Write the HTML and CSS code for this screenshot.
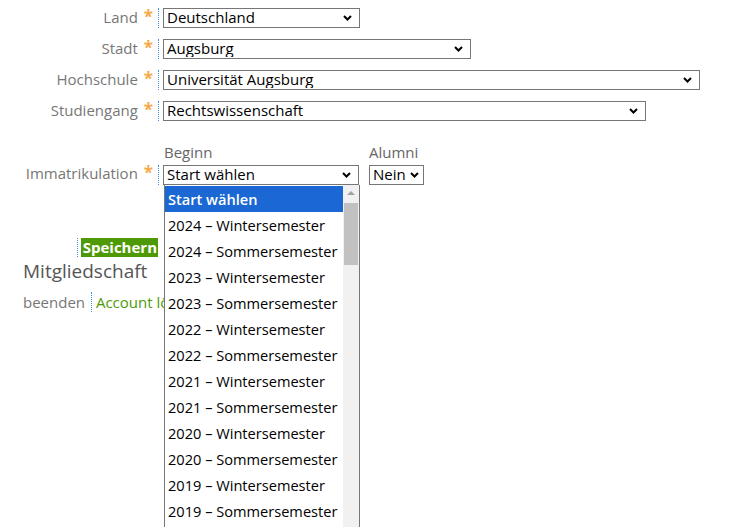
FILE: index.html
```html
<!DOCTYPE html>
<html lang="de">

<head>
    <meta charset="UTF-8">
    <meta name="viewport" content="width=device-width, initial-scale=1.0">
    <title>Profil</title>
    <link rel="stylesheet" href="styles.css">
</head>

<body>
    <form class="profile">
        <div class="row">
            <label class="lbl">Land <span class="req">*</span></label>
            <span class="field">
                <select class="sel sel-land">
                    <option>Deutschland</option>
                </select>
            </span>
        </div>
        <div class="row">
            <label class="lbl">Stadt <span class="req">*</span></label>
            <span class="field">
                <select class="sel sel-stadt">
                    <option>Augsburg</option>
                </select>
            </span>
        </div>
        <div class="row">
            <label class="lbl">Hochschule <span class="req">*</span></label>
            <span class="field">
                <select class="sel sel-hs">
                    <option>Universität Augsburg</option>
                </select>
            </span>
        </div>
        <div class="row">
            <label class="lbl">Studiengang <span class="req">*</span></label>
            <span class="field">
                <select class="sel sel-sg">
                    <option>Rechtswissenschaft</option>
                </select>
            </span>
        </div>

        <div class="row row-immatr">
            <label class="lbl">Immatrikulation <span class="req">*</span></label>
            <div class="pair">
                <div class="group">
                    <div class="caption">Beginn</div>
                    <span class="field">
                        <select class="sel sel-start">
                            <option>Start wählen</option>
                        </select>
                        <!-- geöffnete Liste -->
                        <div class="dropdown">
                            <ul class="options">
                                <li class="active">Start wählen</li>
                                <li>2024 – Wintersemester</li>
                                <li>2024 – Sommersemester</li>
                                <li>2023 – Wintersemester</li>
                                <li>2023 – Sommersemester</li>
                                <li>2022 – Wintersemester</li>
                                <li>2022 – Sommersemester</li>
                                <li>2021 – Wintersemester</li>
                                <li>2021 – Sommersemester</li>
                                <li>2020 – Wintersemester</li>
                                <li>2020 – Sommersemester</li>
                                <li>2019 – Wintersemester</li>
                                <li>2019 – Sommersemester</li>
                            </ul>
                            <div class="scrollbar">
                                <span class="arrow-up"></span>
                                <span class="thumb"></span>
                            </div>
                        </div>
                    </span>
                </div>
                <div class="group">
                    <div class="caption">Alumni</div>
                    <select class="sel sel-alumni">
                        <option>Nein</option>
                    </select>
                </div>
            </div>
        </div>

        <div class="actions">
            <span class="field">
                <button type="button" class="btn-save">Speichern</button>
            </span>
        </div>
    </form>

    <h2 class="title">Mitgliedschaft</h2>
    <div class="links">
        <span class="muted">beenden</span>
        <span class="sep"><a href="#" class="link">Account löschen</a></span>
    </div>
</body>

</html>
```

FILE: styles.css
```css
* {
    margin: 0;
    padding: 0;
    box-sizing: border-box;
}

html,
body {
    min-height: 100%;
}

body {
    font-family: "Open Sans", "Noto Sans", sans-serif;
    font-size: 15px;
    color: #222;
    background-color: #fff;
    padding: 8px 0 0 23px;
    min-height: 527px;
}

.row {
    display: flex;
    align-items: center;
    height: 20px;
    margin-bottom: 11px;
}

.lbl {
    width: 135px;
    text-align: right;
    color: #777;
    line-height: 18px;
    padding-right: 5px;
    margin-bottom: 2px;
}

.req {
    color: #f5a94a;
    font-size: 17px;
    font-weight: 700;
    margin-left: 2px;
}

.field {
    position: relative;
    display: inline-flex;
    border-left: 1px dotted #3a8ee6;
    padding-left: 4px;
}

/* eigener Pfeil, damit der Text nicht abgeschnitten wird */
.sel {
    appearance: none;
    -webkit-appearance: none;
    font-family: inherit;
    font-size: 15px;
    line-height: 17px;
    color: #000;
    height: 20px;
    border: 1px solid #767676;
    border-radius: 0;
    background-color: #fff;
    background-image: url("data:image/svg+xml,%3Csvg xmlns='http://www.w3.org/2000/svg' width='9' height='6' viewBox='0 0 9 6'%3E%3Cpath d='M1 1l3.5 3.5L8 1' fill='none' stroke='%23000' stroke-width='2'/%3E%3C/svg%3E");
    background-repeat: no-repeat;
    background-position: right 7px center;
    padding: 0 20px 1px 3px;
}

.sel-land { width: 197px; }
.sel-stadt { width: 308px; }
.sel-hs { width: 537px; }
.sel-sg { width: 483px; }
.sel-start { width: 196px; }

.sel-alumni {
    width: 55px;
    padding: 0 12px 1px 3px;
    background-position: right 4px center;
}

.row-immatr {
    height: auto;
    align-items: flex-end;
    margin-top: 21px;
}

.row-immatr .lbl {
    margin-bottom: 3px;
}

.pair {
    display: flex;
    gap: 10px;
}

.caption {
    color: #666;
    padding-left: 6px;
    line-height: 20px;
    padding-bottom: 2px;
}

.group:last-child .caption {
    padding-left: 0;
}

.dropdown {
    position: absolute;
    top: 20px;
    left: 5px;
    width: 196px;
    height: 342px;
    background-color: #fff;
    border-left: 1px solid #767676;
    border-right: 1px solid #767676;
    display: flex;
    overflow: hidden;
    z-index: 5;
}

.options {
    list-style: none;
    flex: 1;
    padding-top: 1px;
}

.options li {
    height: 26px;
    line-height: 26px;
    padding-left: 3px;
    color: #000;
    font-size: 14.6px;
    white-space: nowrap;
}

.options .active {
    background-color: #1b68d4;
    color: #fff;
    font-weight: 600;
}

.scrollbar {
    position: relative;
    width: 16px;
    background-color: #f1f1f1;
}

.arrow-up {
    position: absolute;
    top: 6px;
    left: 4px;
    border-left: 4px solid transparent;
    border-right: 4px solid transparent;
    border-bottom: 4px solid #a3a3a3;
}

.thumb {
    position: absolute;
    top: 18px;
    left: 1px;
    width: 14px;
    height: 62px;
    background-color: #c1c1c1;
}

.actions {
    width: 135px;
    display: flex;
    justify-content: flex-end;
    margin-top: 53px;
}

.actions .field {
    padding-left: 3px;
}

.btn-save {
    font-family: inherit;
    font-size: 15px;
    font-weight: 700;
    color: #fff;
    background-color: #4e9a06;
    border: none;
    height: 19px;
    line-height: 19px;
    padding: 0 1px 0 2px;
}

.title {
    font-size: 19px;
    font-weight: 400;
    color: #555;
    margin-top: 1px;
    line-height: 26px;
}

.links {
    margin-top: 8px;
    line-height: 20px;
}

.muted {
    color: #777;
}

.sep {
    border-left: 1px dotted #3a8ee6;
    padding-left: 4px;
    margin-left: 2px;
}

.link {
    color: #4e9a06;
    text-decoration: none;
}
```
